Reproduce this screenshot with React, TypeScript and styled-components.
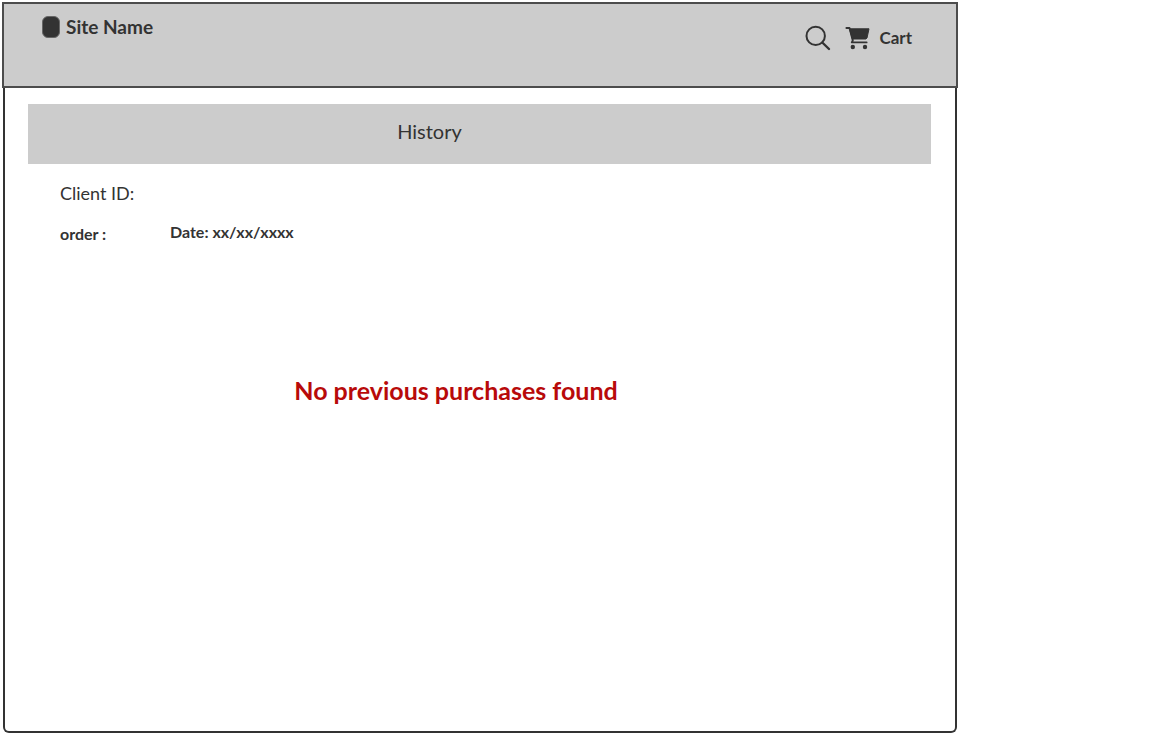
import React from "react";
import styled, { createGlobalStyle } from "styled-components";

const ink = "#333333";
const fill = "#cccccc";

const GlobalStyle = createGlobalStyle`
  *, *::before, *::after { box-sizing: border-box; }
  body {
    margin: 0;
    background: #ffffff;
    color: ${ink};
    font-family: Lato, "Open Sans", sans-serif;
  }
  h1, h2, p { margin: 0; }
`;

const Page = styled.div`
  display: flex;
  flex-direction: column;
  min-height: 100vh;
  padding: 2px 200px 3px 2px;
`;

const Header = styled.header`
  display: flex;
  justify-content: space-between;
  align-items: flex-start;
  height: 86px;
  padding: 11px 44px 0 38px;
  background: ${fill};
  border: 2px solid #4c4c4c;
`;

const Brand = styled.a`
  display: flex;
  align-items: center;
  gap: 6px;
  color: inherit;
  font-size: 19px;
  font-weight: 700;
  line-height: 24px;
  text-decoration: none;
`;

const Mark = styled.span`
  width: 18px;
  height: 22px;
  background: ${ink};
  border: 1px solid #666666;
  border-radius: 6px;
`;

const Actions = styled.nav`
  display: flex;
  align-items: center;
  gap: 14px;
  padding-top: 10px;
`;

const SearchButton = styled.button`
  display: flex;
  padding: 0;
  color: inherit;
  background: none;
  border: 0;
`;

const CartLink = styled.a`
  display: flex;
  align-items: center;
  gap: 8px;
  color: inherit;
  font-size: 17px;
  font-weight: 700;
  line-height: 24px;
  text-decoration: none;
`;

const Main = styled.main`
  flex: 1;
  display: flex;
  flex-direction: column;
  margin: 0 1px;
  padding: 16px 24px;
  border: 2px solid ${ink};
  border-top: 0;
  border-radius: 0 0 6px 6px;
`;

const TitleBar = styled.div`
  display: flex;
  justify-content: center;
  padding: 15px 100px 21px 0;
  margin-left: -1px;
  background: ${fill};
`;

const Title = styled.h1`
  font-size: 20px;
  font-weight: 400;
  line-height: 24px;
`;

const Details = styled.section`
  display: flex;
  flex-direction: column;
  gap: 17px;
  padding: 17px 31px;
`;

const Client = styled.p`
  font-size: 18px;
  line-height: 24px;
`;

const OrderRow = styled.div`
  display: grid;
  grid-template-columns: 110px 1fr;
  align-items: start;
  font-size: 16px;
  font-weight: 700;
`;

const Field = styled.p<{ $line: number }>`
  line-height: ${({ $line }) => $line}px;
`;

const Empty = styled.p`
  padding: 111px 48px 0 0;
  color: #b80a0a;
  font-size: 25px;
  font-weight: 700;
  line-height: 32px;
  text-align: center;
`;

const SearchIcon = () => (
  <svg width="26" height="26" viewBox="0 0 26 26" fill="none" stroke="currentColor" strokeWidth="2" strokeLinecap="round" aria-hidden="true">
    <circle cx="10.7" cy="10.9" r="9.2" />
    <path d="M17.3 17.5 24 24" strokeWidth="2.4" />
  </svg>
);

const CartIcon = () => (
  <svg width="26" height="24" viewBox="0 0 26 24" fill="none" stroke="currentColor" strokeLinecap="round" strokeLinejoin="round" aria-hidden="true">
    <path d="M1.4 2H4.5L7.8 14.4 6.8 16.4H21.6" strokeWidth="1.9" />
    <path d="M4.8 2.8H24L22 12 20.8 13H7.8Z" fill="currentColor" strokeWidth="1" />
    <circle cx="7.8" cy="21" r="2.2" fill="currentColor" stroke="none" />
    <circle cx="20" cy="21" r="2.2" fill="currentColor" stroke="none" />
  </svg>
);

export default function App() {
  return (
    <>
      <GlobalStyle />
      <Page>
        <Header>
          <Brand href="#">
            <Mark />
            Site Name
          </Brand>
          <Actions>
            <SearchButton type="button" aria-label="Search">
              <SearchIcon />
            </SearchButton>
            <CartLink href="#cart">
              <CartIcon />
              Cart
            </CartLink>
          </Actions>
        </Header>
        <Main>
          <TitleBar>
            <Title>History</Title>
          </TitleBar>
          <Details>
            <Client>Client ID:</Client>
            <OrderRow>
              <Field $line={24}>order :</Field>
              <Field $line={20}>Date: xx/xx/xxxx</Field>
            </OrderRow>
          </Details>
          <Empty>No previous purchases found</Empty>
        </Main>
      </Page>
    </>
  );
}
